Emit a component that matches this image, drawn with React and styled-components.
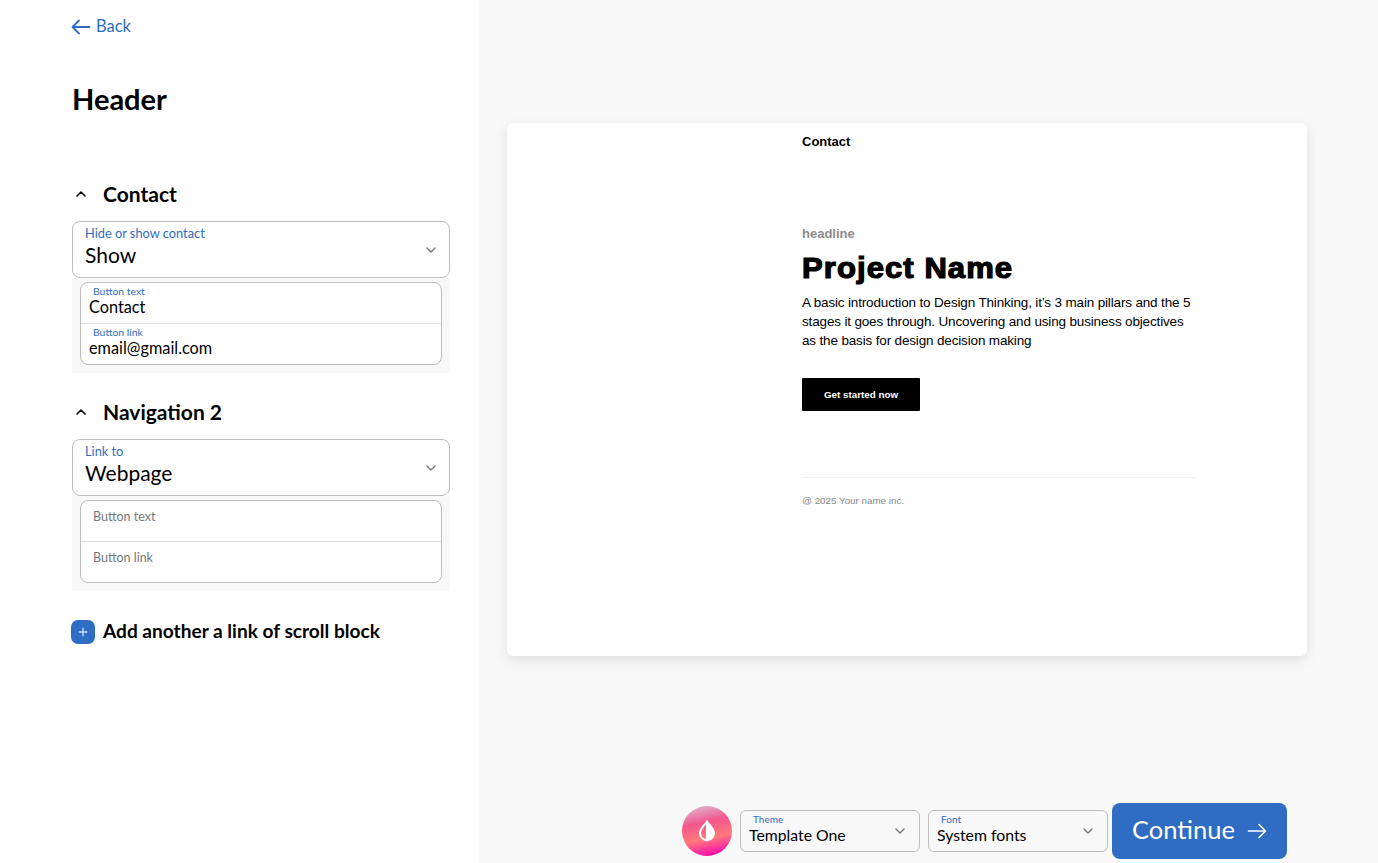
import React from "react";
import styled, { createGlobalStyle } from "styled-components";

const GlobalStyle = createGlobalStyle`
  html, body {
    margin: 0;
    padding: 0;
    height: 100%;
    background: #ffffff;
  }
  * {
    box-sizing: border-box;
  }
`;

const uiFont = `"Lato", "Noto Sans", sans-serif`;
const previewFont = `"Liberation Sans", Arial, sans-serif`;
const blue = "#2f6dc4";

const Chevron = ({ up, size = 12, color = "#777", width = 1.4 }) => (
  <svg width={size} height={size} viewBox="0 0 12 12" fill="none">
    <path
      d={up ? "M2 8l4-4 4 4" : "M2 4l4 4 4-4"}
      stroke={color}
      strokeWidth={width}
      strokeLinecap="round"
      strokeLinejoin="round"
    />
  </svg>
);

const Section = ({ title, selectLabel, selectValue, fields }) => (
  <SectionWrap>
    <SectionTitle>
      <Chevron up color="#000" width={1.6} />
      <span>{title}</span>
    </SectionTitle>
    <SelectBox>
      <div>
        <SelectLabel>{selectLabel}</SelectLabel>
        <SelectValue>{selectValue}</SelectValue>
      </div>
      <SelectArrow>
        <Chevron />
      </SelectArrow>
    </SelectBox>
    <FieldsTray>
      <FieldsCard>
        {fields.map((f) => (
          <Field key={f.label}>
            <FieldLabel $filled={!!f.value}>{f.label}</FieldLabel>
            {f.value && <FieldValue>{f.value}</FieldValue>}
          </Field>
        ))}
      </FieldsCard>
    </FieldsTray>
  </SectionWrap>
);

const App = () => {
  return (
    <Page>
      <GlobalStyle />
      <Sidebar>
        <BackLink>
          <svg width="20" height="16" viewBox="0 0 20 16" fill="none">
            <path
              d="M18.5 8H1.5M8 1.5L1.5 8 8 14.5"
              stroke={blue}
              strokeWidth="1.8"
              strokeLinecap="round"
              strokeLinejoin="round"
            />
          </svg>
          <span>Back</span>
        </BackLink>
        <PageTitle>Header</PageTitle>
        <Section
          title="Contact"
          selectLabel="Hide or show contact"
          selectValue="Show"
          fields={[
            { label: "Button text", value: "Contact" },
            { label: "Button link", value: "email@gmail.com" },
          ]}
        />
        <Section
          title="Navigation 2"
          selectLabel="Link to"
          selectValue="Webpage"
          fields={[{ label: "Button text" }, { label: "Button link" }]}
        />
        <AddRow>
          <AddIcon>
            <svg width="10" height="10" viewBox="0 0 10 10" fill="none">
              <path d="M5 1.2v7.6M1.2 5h7.6" stroke="#cfe0f7" strokeWidth="1.3" strokeLinecap="round" />
            </svg>
          </AddIcon>
          <span>Add another a link of scroll block</span>
        </AddRow>
      </Sidebar>

      <Main>
        <PreviewCard>
          <PreviewInner>
            <PreviewNav>Contact</PreviewNav>
            <Headline>headline</Headline>
            <ProjectName>Project Name</ProjectName>
            <Intro>
              A basic introduction to Design Thinking, it’s 3 main pillars and the 5 stages it goes
              through. Uncovering and using business objectives as the basis for design decision making
            </Intro>
            <CtaButton>Get started now</CtaButton>
            <PreviewFooter>@ 2025 Your name inc.</PreviewFooter>
          </PreviewInner>
        </PreviewCard>

        <Toolbar>
          <ThemeOrb>
            <svg width="18" height="22" viewBox="0 0 18 22" fill="none">
              <path d="M9 1.5C6.5 5 2 8.5 2 13.2a7 7 0 0 0 7 7V1.5z" fill="none" stroke="#fff" strokeWidth="2" strokeLinejoin="round" />
              <path d="M9 1.5c2.5 3.5 7 7 7 11.7a7 7 0 0 1-7 7V1.5z" fill="#fff" stroke="#fff" strokeWidth="2" strokeLinejoin="round" />
            </svg>
          </ThemeOrb>
          <ToolSelect>
            <ToolLabel>Theme</ToolLabel>
            <ToolValue>Template One</ToolValue>
            <ToolArrow>
              <Chevron />
            </ToolArrow>
          </ToolSelect>
          <ToolSelect>
            <ToolLabel>Font</ToolLabel>
            <ToolValue>System fonts</ToolValue>
            <ToolArrow>
              <Chevron />
            </ToolArrow>
          </ToolSelect>
          <ContinueButton>
            <ContinueText>Continue</ContinueText>
            <svg width="20" height="16" viewBox="0 0 20 16" fill="none">
              <path
                d="M1.5 8h17M12 1.5L18.5 8 12 14.5"
                stroke="#fff"
                strokeWidth="1.6"
                strokeLinecap="round"
                strokeLinejoin="round"
              />
            </svg>
          </ContinueButton>
        </Toolbar>
      </Main>
    </Page>
  );
};

export default App;

const Page = styled.div`
  display: flex;
  height: 100vh;
  overflow: hidden;
  font-family: ${uiFont};
  color: #000;
`;

const Sidebar = styled.aside`
  width: 479px;
  flex-shrink: 0;
  background: #fff;
  padding: 15px 29px 0 72px;
`;

const BackLink = styled.div`
  display: flex;
  align-items: center;
  gap: 5px;
  height: 24px;
  margin-left: -1px;
  color: ${blue};
  font-size: 16.5px;

  span {
    padding-bottom: 2px;
  }
`;

const PageTitle = styled.h1`
  margin: 42px 0 0;
  font-size: 29px;
  line-height: 36px;
  font-weight: 700;
`;

const SectionWrap = styled.section`
  margin-bottom: 25px;

  &:first-of-type {
    margin-top: 63px;
  }
`;

const SectionTitle = styled.div`
  display: flex;
  align-items: center;
  gap: 16px;
  height: 28px;
  padding-left: 3px;
  margin-bottom: 13px;
  font-size: 21px;
  font-weight: 700;

  span {
    padding-bottom: 2px;
  }
`;

const SelectBox = styled.div`
  display: flex;
  justify-content: space-between;
  height: 57px;
  padding: 4px 12px 0;
  background: #fff;
  border: 1px solid #bdbdbd;
  border-radius: 8px;
`;

const SelectLabel = styled.div`
  font-size: 12.8px;
  line-height: 15px;
  color: ${blue};
`;

const SelectValue = styled.div`
  margin-top: 1px;
  font-size: 21px;
  line-height: 26px;
`;

const SelectArrow = styled.div`
  padding-top: 14px;
`;

const FieldsTray = styled.div`
  background: #f8f8f8;
  padding: 4px 8px 8px;
`;

const FieldsCard = styled.div`
  background: #fff;
  border: 1px solid #bdbdbd;
  border-radius: 8px;
  overflow: hidden;
`;

const Field = styled.div`
  height: 40px;
  padding: 2px 8px 0;

  & + & {
    height: 41px;
    border-top: 1px solid #e2e2e2;
  }
`;

const FieldLabel = styled.div`
  padding-left: 4px;
  font-size: ${(p) => (p.$filled ? "10.4px" : "12.5px")};
  line-height: ${(p) => (p.$filled ? "12px" : "28px")};
  color: ${(p) => (p.$filled ? blue : "#777")};
`;

const FieldValue = styled.div`
  font-size: 16.3px;
  line-height: 20px;
`;

const AddRow = styled.div`
  display: flex;
  align-items: center;
  gap: 8px;
  margin: 4px 0 0 -1px;
  padding-top: 3px;
  font-size: 19.1px;
  font-weight: 700;

  span {
    padding-bottom: 2px;
  }
`;

const AddIcon = styled.div`
  width: 24px;
  height: 24px;
  display: flex;
  align-items: center;
  justify-content: center;
  background: ${blue};
  border-radius: 7px;
`;

const Main = styled.main`
  flex: 1;
  min-width: 0;
  display: flex;
  flex-direction: column;
  background: #f8f8f8;
  padding: 123px 91px 4px 28px;
`;

const PreviewCard = styled.div`
  flex-shrink: 0;
  width: 800px;
  height: 533px;
  background: #fff;
  border-radius: 6px;
  box-shadow: 0 4px 12px rgba(0, 0, 0, 0.1);
  padding-left: 295px;
  font-family: ${previewFont};
`;

const PreviewInner = styled.div`
  width: 394px;
`;

const PreviewNav = styled.div`
  padding-top: 11px;
  font-size: 13px;
  line-height: 16px;
  font-weight: 700;
`;

const Headline = styled.div`
  margin-top: 76px;
  font-size: 13px;
  line-height: 16px;
  font-weight: 700;
  color: #8c8c8c;
`;

const ProjectName = styled.div`
  margin-top: 8px;
  font-size: 29px;
  line-height: 36px;
  font-weight: 700;
  letter-spacing: 1px;
  -webkit-text-stroke: 1.2px #000;
  transform: scaleX(1.07);
  transform-origin: left center;
`;

const Intro = styled.p`
  margin: 7px 0 0;
  font-size: 13.5px;
  letter-spacing: -0.16px;
  line-height: 19px;
`;

const CtaButton = styled.div`
  display: flex;
  align-items: center;
  justify-content: center;
  width: 118px;
  height: 33px;
  margin-top: 28px;
  background: #000;
  color: #fff;
  border-radius: 1px;
  font-size: 9.8px;
  font-weight: 700;
`;

const PreviewFooter = styled.div`
  margin-top: 66px;
  padding-top: 16px;
  border-top: 1px solid #f0f0f0;
  font-size: 9.8px;
  line-height: 13px;
  color: #888;
`;

const Toolbar = styled.div`
  margin-top: auto;
  display: flex;
  align-items: center;
  justify-content: flex-end;
  gap: 8px;
`;

const ThemeOrb = styled.div`
  width: 50px;
  height: 50px;
  display: flex;
  align-items: center;
  justify-content: center;
  border-radius: 50%;
  background: linear-gradient(168deg, #dcc2d8 0%, #f2568c 35%, #ff7a7c 62%, #fb12ab 90%);
`;

const ToolSelect = styled.div`
  position: relative;
  width: 180px;
  height: 42px;
  padding: 2px 8px 0;
  background: #f8f8f8;
  border: 1px solid #bdbdbd;
  border-radius: 6px;
`;

const ToolLabel = styled.div`
  padding-left: 4px;
  font-size: 10px;
  line-height: 12px;
  color: ${blue};
`;

const ToolValue = styled.div`
  font-size: 15.8px;
  line-height: 22px;
  margin-top: -1px;
`;

const ToolArrow = styled.div`
  position: absolute;
  top: 10px;
  right: 13px;
`;

const ContinueButton = styled.div`
  display: flex;
  align-items: center;
  justify-content: center;
  gap: 12px;
  width: 175px;
  height: 56px;
  margin-left: -4px;
  background: ${blue};
  color: #fff;
  border-radius: 8px;
  font-size: 25.5px;
`;

const ContinueText = styled.span`
  padding-bottom: 4px;
`;
